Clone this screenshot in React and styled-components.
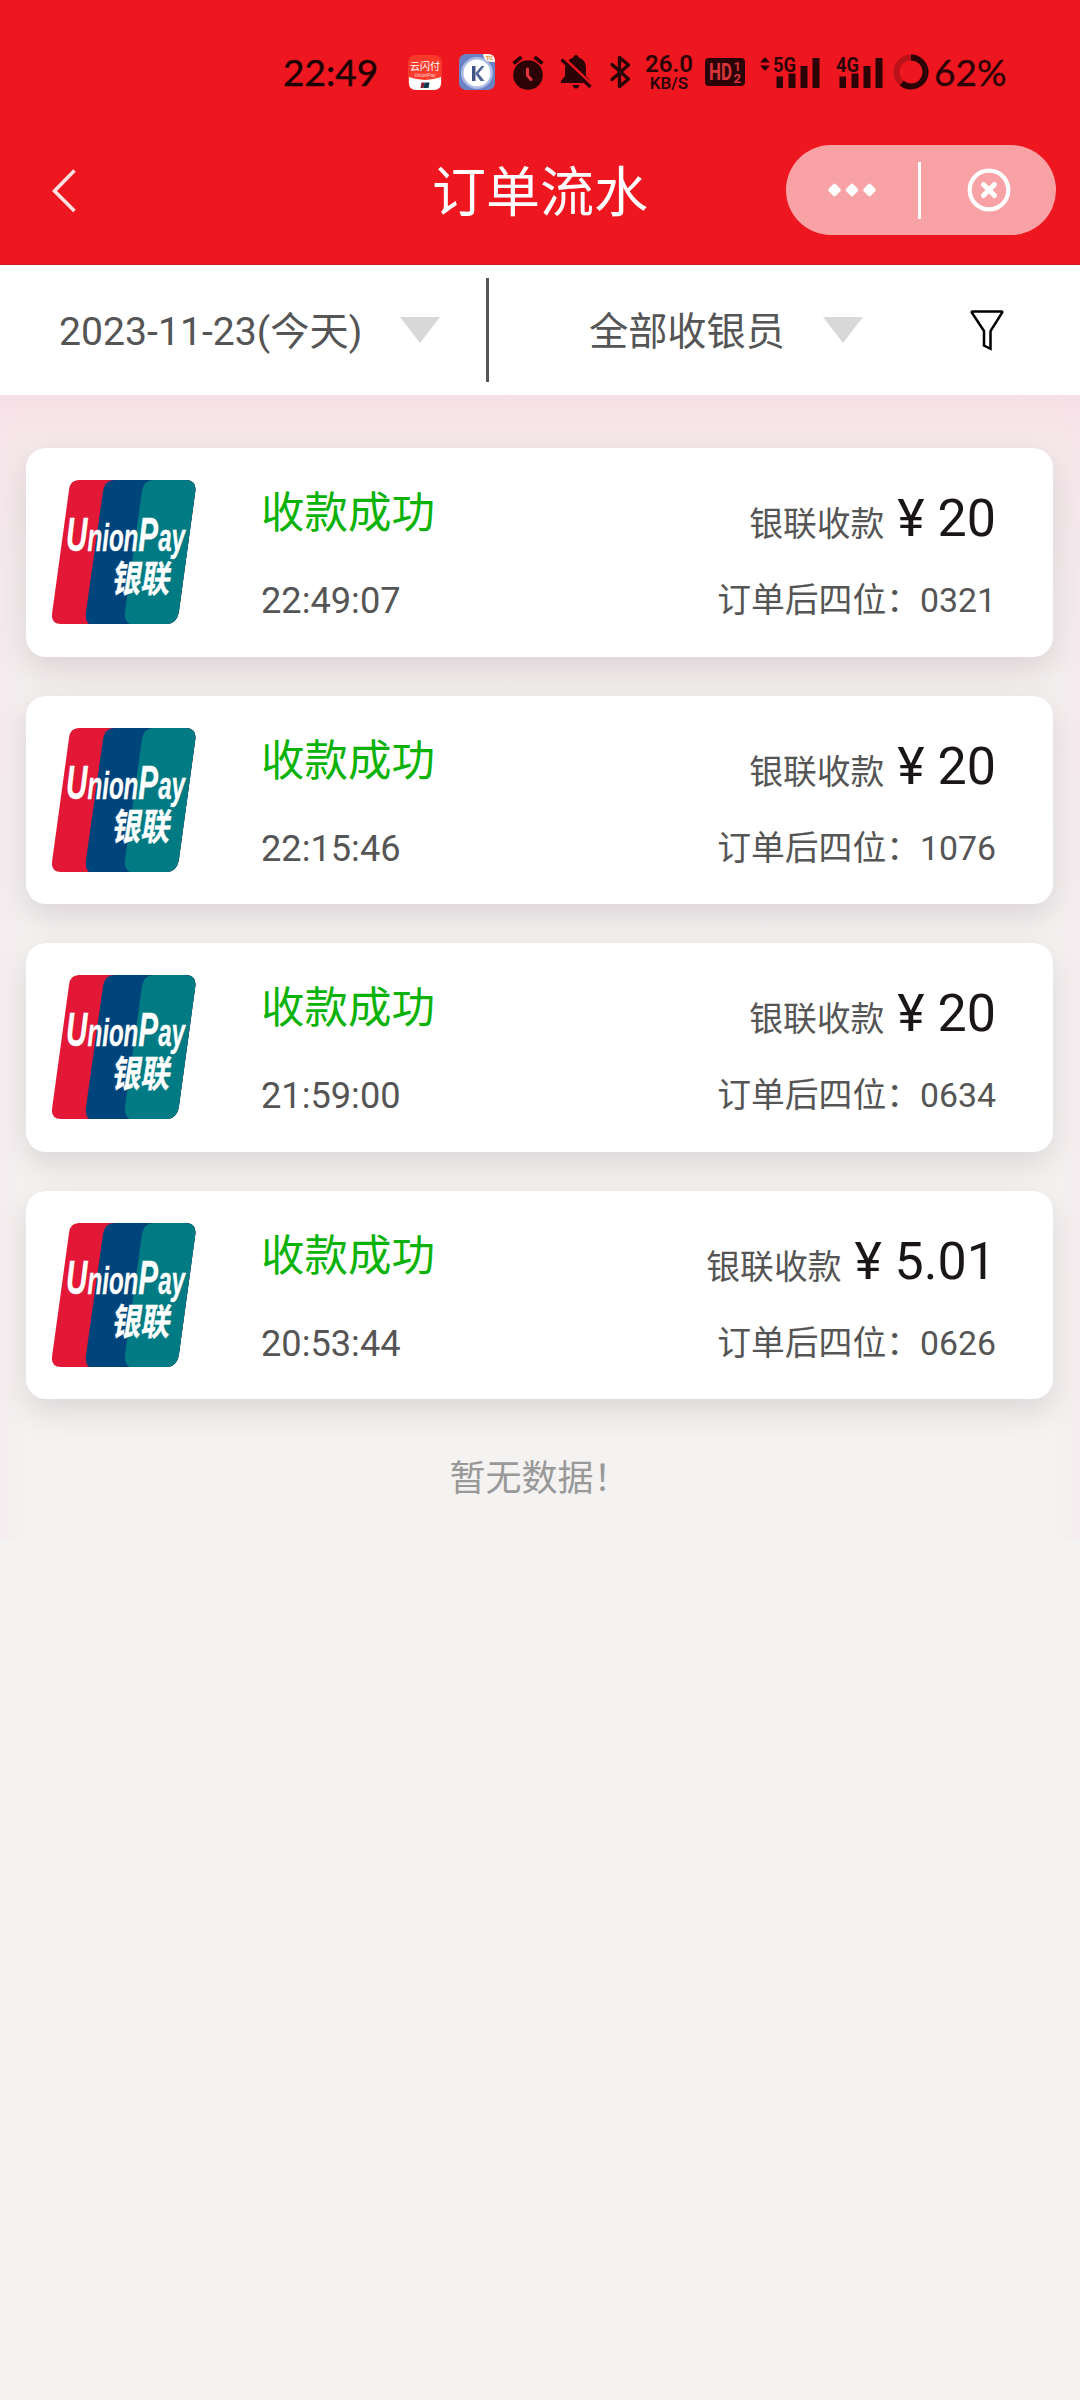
import React from 'react';
import styled, { createGlobalStyle } from 'styled-components';

const orders = [
  { id: 1, time: '22:49:07', amount: '20', tail: '0321' },
  { id: 2, time: '22:15:46', amount: '20', tail: '1076' },
  { id: 3, time: '21:59:00', amount: '20', tail: '0634' },
  { id: 4, time: '20:53:44', amount: '5.01', tail: '0626' },
];

const INK = '#2b0306';

const CloudPayIcon = () => (
  <svg width="34" height="35" viewBox="0 0 34 35">
    <rect width="34" height="35" rx="8" fill="#fb3a2c" />
    <path d="M1 22q16 6 32 0v6q0 7-7 7H8q-7 0-7-7z" fill="#fff" />
    <text x="17" y="15" fontSize="10" textAnchor="middle" fill="#fff">云闪付</text>
    <text x="17" y="21.5" fontSize="5" textAnchor="middle" fill="#ffd5d0">UnionPay</text>
    <path d="M13.500 27.500h3l-1 5.500h-3z" fill="#8c1b30" />
    <path d="M16.500 27.500h5l-1 5.500h-5z" fill="#0c3c50" />
  </svg>
);

const KIcon = () => (
  <svg width="36" height="36" viewBox="0 0 36 36">
    <rect width="36" height="36" rx="7" fill="#6a82c4" />
    <circle cx="18" cy="19" r="16" fill="#a9b9e6" />
    <circle cx="18" cy="19" r="13.500" fill="#fff" />
    <path d="M13 12h3.500v15H13z" fill="#3f5486" />
    <path d="M16.500 19l6-7h3l-6 7.500 6 7.500h-4l-5-7z" fill="#4f6595" />
    <path d="M24 0h5q7 0 7 7v1h-4q-7 0-8-8z" fill="#fff3e6" />
    <text x="30.500" y="6" fontSize="5.500" fontWeight="700" textAnchor="middle" fill="#e08a3c">TC</text>
  </svg>
);

const AlarmIcon = () => (
  <svg width="32" height="35" viewBox="0 0 32 35">
    <circle cx="16" cy="20" r="14.800" fill={INK} />
    <path d="M1.500 8.500l8-6.500M30.500 8.500l-8-6.500" stroke={INK} strokeWidth="3.600" fill="none" />
    <path d="M15.500 14v6.500l3.500 4" stroke="#e8333d" strokeWidth="3" fill="none" strokeLinecap="round" />
  </svg>
);

const BellOffIcon = () => (
  <svg width="32" height="34" viewBox="0 0 32 34">
    <path
      d="M16 0a2.500 2.500 0 0 1 2.500 2.500Q26 4.500 26 13v8l4 4.500V28H1v-2.500L5 21v-8Q6 4.500 13.500 2.500A2.500 2.500 0 0 1 16 0z"
      fill={INK}
    />
    <path d="M12.500 30h7q-1 3.500-3.500 3.500T12.500 30z" fill={INK} />
    <path d="M3.500 2.500L33 30.500" stroke="#ee171f" strokeWidth="2.600" />
    <path d="M1.500 4.500L30.500 32" stroke={INK} strokeWidth="3.200" />
  </svg>
);

const BluetoothIcon = () => (
  <svg width="21" height="34" viewBox="0 0 21 34">
    <path
      d="M2 9.500L18.500 24 9.500 31.500v-29L18.500 10 2 24.500"
      fill="none"
      stroke={INK}
      strokeWidth="3.400"
      strokeLinejoin="round"
      strokeLinecap="round"
    />
  </svg>
);

const HdIcon = () => (
  <svg width="40" height="28" viewBox="0 0 40 28">
    <rect width="40" height="28" rx="4" fill={INK} />
    <g fill="#d9353b" fontFamily="Roboto" fontWeight="700">
      <text x="4" y="22" fontSize="23" textLength="23" lengthAdjust="spacingAndGlyphs">HD</text>
      <text x="28.500" y="13.200" fontSize="13">1</text>
      <text x="28.500" y="25" fontSize="13">2</text>
    </g>
  </svg>
);

const SignalIcon = ({ label, arrows }) => (
  <svg width="61" height="33" viewBox="0 0 61 33">
    {arrows && <path d="M1 6.500L6 1l5 5.500zM1 9.500h10L6 15z" fill={INK} />}
    <text
      x="14"
      y="15.500"
      fontFamily="Roboto"
      fontWeight="700"
      fontSize="20.500"
      textLength="23"
      lengthAdjust="spacingAndGlyphs"
      fill={INK}
    >
      {label}
    </text>
    <path d="M17.500 20.500H24V32h-6.500zM29.500 17.500h7V32h-7zM41.500 10h7v22h-7zM53.500 2h7v30h-7z" fill={INK} />
  </svg>
);

const BatteryRing = () => (
  <svg width="36" height="36" viewBox="0 0 36 36">
    <circle cx="18" cy="18" r="14.500" fill="none" stroke="#bb1219" strokeWidth="6" />
    <circle
      cx="18"
      cy="18"
      r="14.500"
      fill="none"
      stroke={INK}
      strokeWidth="6"
      pathLength="100"
      strokeDasharray="61 39"
      transform="rotate(-90 18 18)"
    />
  </svg>
);

const BackIcon = () => (
  <svg width="26" height="44" viewBox="0 0 26 44">
    <path d="M23.500 2.500L3.500 23l20 20" fill="none" stroke="#ffe1e1" strokeWidth="3.600" />
  </svg>
);

const MoreIcon = () => (
  <svg width="48" height="14" viewBox="0 0 48 14">
    <path
      d="M6.500 2.500L11 7l-4.500 4.500L2 7zM24 2.500L28.500 7 24 11.500 19.500 7zM41.500 2.500L46 7l-4.500 4.500L37 7z"
      fill="#fff"
      stroke="#fff"
      strokeWidth="3.600"
      strokeLinejoin="round"
    />
  </svg>
);

const CloseIcon = () => (
  <svg width="44" height="44" viewBox="0 0 44 44">
    <circle cx="22" cy="22" r="19.300" fill="none" stroke="#fff" strokeWidth="4.200" />
    <path d="M16.500 16.500l11 11M27.500 16.500l-11 11" stroke="#fff" strokeWidth="5" strokeLinecap="round" />
  </svg>
);

const FunnelIcon = () => (
  <svg width="34" height="41" viewBox="0 0 34 41">
    <path
      d="M2.500 1.500h29q1.200 0 .6 1.200L20.500 21v17.800L14 35.500V21L1.900 2.700q-.6-1.200.6-1.200z"
      fill="none"
      stroke="#000"
      strokeWidth="2.500"
    />
  </svg>
);

const UnionPayLogo = () => (
  <svg width="144" height="144" viewBox="0 0 144 144">
    <defs>
      <clipPath id="card">
        <path d="M27 0h106q11 0 10.500 10L127 131q-2 13-13 13H9q-10 0-9-10L17 10Q18 0 27 0z" />
      </clipPath>
    </defs>
    <g clipPath="url(#card)">
      <rect width="144" height="144" fill="#e21836" />
      <path d="M144 0H62q-9 0-11 11L34 132q-1 9 3 12h107z" fill="#00447c" />
      <path d="M144 0h-42q-10 0-12 11L73 132q-1 9 5 12h66z" fill="#007b84" />
    </g>
    <g fill="#fff" stroke="#fff" fontWeight="700">
      <text
        x="14"
        y="71"
        fontFamily="Liberation Sans"
        fontStyle="italic"
        fontSize="39"
        strokeWidth=".3"
        textLength="119"
        lengthAdjust="spacingAndGlyphs"
      >
        <tspan fontSize="48">U</tspan>nion<tspan fontSize="48">P</tspan>ay
      </text>
      <text
        x="62"
        y="112.500"
        fontFamily="Noto Sans CJK SC"
        fontSize="37"
        strokeWidth=".4"
        textLength="58"
        lengthAdjust="spacingAndGlyphs"
        transform="translate(15 0) skewX(-9)"
      >
        银联
      </text>
    </g>
  </svg>
);

const OrderCard = ({ time, amount, tail }) => (
  <Card>
    <UnionPayLogo />
    <Result>
      <Status>收款成功</Status>
      <Time>{time}</Time>
    </Result>
    <Payment>
      <Amount><small>银联收款</small> ¥ {amount}</Amount>
      <Tail>订单后四位：{tail}</Tail>
    </Payment>
  </Card>
);

const App = () => (
  <Page>
    <GlobalStyle />
    <Header>
      <StatusBar>
        <Clock>22:49</Clock>
        <Slot $left={30}><CloudPayIcon /></Slot>
        <Slot $left={17}><KIcon /></Slot>
        <Slot $left={17}><AlarmIcon /></Slot>
        <Slot $left={16}><BellOffIcon /></Slot>
        <Slot $left={18}><BluetoothIcon /></Slot>
        <Speed>
          <b>26.0</b>
          <span>KB/S</span>
        </Speed>
        <Slot $left={12}><HdIcon /></Slot>
        <Slot $left={14}><SignalIcon label="5G" arrows /></Slot>
        <Slot $left={2}><SignalIcon label="4G" /></Slot>
        <Slot $left={10}><BatteryRing /></Slot>
        <Percent>62%</Percent>
      </StatusBar>
      <NavBar>
        <BackIcon />
        <Title>订单流水</Title>
        <Capsule>
          <MoreIcon />
          <CapsuleLine />
          <CloseIcon />
        </Capsule>
      </NavBar>
    </Header>

    <FilterBar>
      <DateFilter><span>2023-11-23(今天)</span><Caret /></DateFilter>
      <FilterLine />
      <CashierFilter><span>全部收银员</span><Caret /></CashierFilter>
      <FunnelIcon />
    </FilterBar>

    <List>
      {orders.map(order => (
        <OrderCard key={order.id} {...order} />
      ))}
      <Empty>暂无数据！</Empty>
    </List>
  </Page>
);

const GlobalStyle = createGlobalStyle`
  body {
    margin: 0;
    background: #f4f3f1;
    font-family: Roboto, 'Noto Sans CJK SC', sans-serif;
    font-weight: 400;
  }

  svg {
    display: block;
    flex: none;
    overflow: visible;
  }
`

const Page = styled.div`
  width: 1080px;
  height: 2400px;
  overflow: hidden;
`

const Header = styled.header`
  box-sizing: border-box;
  height: 265px;
  background: #ee171f;
  border-bottom: 1px solid #c9202a;
`

const StatusBar = styled.div`
  display: flex;
  align-items: center;
  height: 144px;
  padding-left: 283px;
  box-sizing: border-box;
`

const Slot = styled.span`
  margin-left: ${props => props.$left}px;
`

const Clock = styled.span`
  width: 95px;
  font: 400 37px/40px Lato, sans-serif;
  color: #1c0203;
  -webkit-text-stroke: .5px #1c0203;
`

const Percent = styled.span`
  margin-left: 5px;
  font: 400 37px/40px Lato, sans-serif;
  color: ${INK};
  -webkit-text-stroke: .3px ${INK};
`

const Speed = styled.span`
  display: flex;
  flex-direction: column;
  align-items: center;
  width: 48px;
  margin-left: 14px;
  padding-top: 2px;
  color: ${INK};

  b {
    font: 600 24px/19px Roboto, sans-serif;
  }

  span {
    font: 600 17px/18px Roboto, sans-serif;
  }
`

const NavBar = styled.div`
  display: grid;
  grid-template-columns: 1fr auto 1fr;
  align-items: center;
  height: 92px;
  padding: 0 24px 0 51px;
`

const Title = styled.h1`
  margin: 8px 27px 0 0;
  font-size: 54px;
  font-weight: 400;
  line-height: 80px;
  color: #fff;
`

const Capsule = styled.div`
  justify-self: end;
  display: flex;
  align-items: center;
  box-sizing: border-box;
  width: 270px;
  height: 90px;
  padding: 0 45px 0 42px;
  border-radius: 45px;
  background: #f9a2a6;
`

const CapsuleLine = styled.i`
  width: 3px;
  height: 57px;
  margin: 0 46px 0 42px;
  background: #fff;
`

const FilterBar = styled.div`
  display: flex;
  align-items: center;
  height: 130px;
  background: #fff;
  font-size: 39.200px;
  line-height: 58px;
  color: #555;

  span {
    padding-top: 4px;
    white-space: nowrap;
  }
`

const DateFilter = styled.div`
  display: flex;
  align-items: center;
  justify-content: space-between;
  width: 381px;
  padding: 0 46px 0 59px;
`

const FilterLine = styled.i`
  width: 3px;
  height: 104px;
  background: #555;
`

const CashierFilter = styled.div`
  display: flex;
  align-items: center;
  justify-content: space-between;
  width: 274px;
  padding: 0 107px 0 100px;
`

const Caret = styled.i`
  border: solid transparent;
  border-width: 26px 20px 0;
  border-top-color: #d8d8d8;
`

const List = styled.main`
  display: flex;
  flex-direction: column;
  gap: 39px;
  height: 1145px;
  box-sizing: border-box;
  padding: 53px 27px 0 26px;
  background:
    linear-gradient(90deg, rgba(248, 225, 235, .35), transparent 24px, transparent 1056px, rgba(248, 225, 235, .35)),
    linear-gradient(#f7e0e6 0, #f5e8ea 50px, #f3eeee 200px, #f4f2f1 600px, #f4f3f1 100%);
`

const Card = styled.article`
  display: flex;
  align-items: flex-start;
  box-sizing: border-box;
  height: 208.600px;
  padding: 32px 57px 0 26px;
  border-radius: 20px;
  background: #fff;
  box-shadow: 0 12px 30px rgba(60, 20, 35, .13);
`

const Result = styled.div`
  display: flex;
  flex-direction: column;
  gap: 27px;
  margin-left: 65px;
  padding-top: 4px;
  line-height: 60px;
`

const Payment = styled.div`
  flex: 1;
  display: flex;
  flex-direction: column;
  align-items: flex-end;
  gap: 22px;
  padding-top: 9px;
  line-height: 60px;
`

const Status = styled.span`
  font-size: 43.500px;
  color: #0bb208;
`

const Time = styled.span`
  font-size: 36.200px;
  color: #555;
`

const Amount = styled.span`
  height: 60px;
  font-size: 52px;
  color: #1a1617;
  white-space: pre;

  small {
    font-size: 33.800px;
    line-height: 34px;
    color: #555;
  }
`

const Tail = styled.span`
  font-size: 33.800px;
  color: #555;
`

const Empty = styled.p`
  margin: 0;
  text-align: center;
  font-size: 36px;
  line-height: 82px;
  color: #999;
`

export default App;
